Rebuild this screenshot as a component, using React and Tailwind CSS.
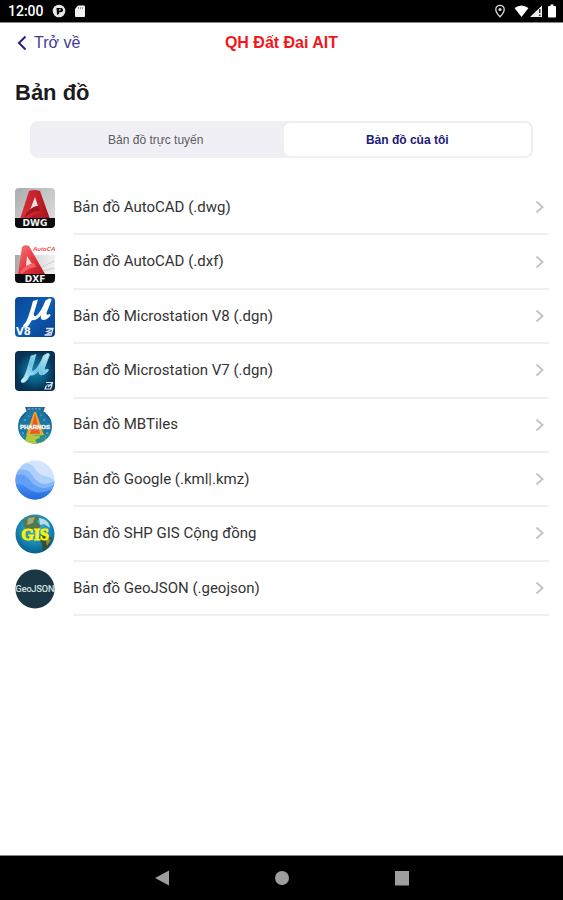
import React from "react";

function DwgIcon() {
  return (
    <svg viewBox="0 0 40 40" className="size-10" aria-hidden="true">
      <defs>
        <linearGradient id="dwgBg" x1="0" y1="0" x2="1" y2="1">
          <stop offset="0" stopColor="#a9abad" />
          <stop offset="1" stopColor="#e2e3e4" />
        </linearGradient>
        <linearGradient id="dwgA" x1="0" y1="0" x2="1" y2="0">
          <stop offset="0" stopColor="#d8303a" />
          <stop offset="0.55" stopColor="#c8202b" />
          <stop offset="1" stopColor="#9d141c" />
        </linearGradient>
        <clipPath id="dwgClip"><rect width="40" height="40" rx="4" /></clipPath>
      </defs>
      <g clipPath="url(#dwgClip)">
        <rect width="40" height="40" fill="url(#dwgBg)" />
        <path d="M5 31 L14 3 Q19 1 25 3 L35 31Z" fill="url(#dwgA)" />
        <path d="M20 9 L23 18 Q18 18 15 22Z" fill="#e4e4e6" />
        <path d="M23 18 L25 23 Q16 22 9 31 L11 26 Q16 19 23 18Z" fill="#9d141c" />
        <path d="M13 31 Q18 26 26 26 L27 31Z" fill="#b21a24" />
        <rect y="30" width="40" height="10" fill="#0b0b0b" />
      </g>
      <text x="20" y="38" textAnchor="middle" fontFamily="DejaVu Sans, sans-serif" fontWeight="700" fontSize="9" fill="#f2f2f2">DWG</text>
    </svg>
  );
}

function DxfIcon() {
  return (
    <svg viewBox="0 0 40 40" className="size-10" aria-hidden="true">
      <defs>
        <linearGradient id="dxfBg" x1="0" y1="0" x2="1" y2="0">
          <stop offset="0" stopColor="#a5a7a9" />
          <stop offset="0.6" stopColor="#dedfe0" />
          <stop offset="1" stopColor="#f2f2f2" />
        </linearGradient>
        <linearGradient id="dxfA" x1="0" y1="0" x2="1" y2="1">
          <stop offset="0" stopColor="#f4787a" />
          <stop offset="0.5" stopColor="#e83b3f" />
          <stop offset="1" stopColor="#b5151b" />
        </linearGradient>
        <clipPath id="dxfClip"><path d="M0 12 V36 Q0 40 4 40 H36 Q40 40 40 36 V10 H20 V0 H4 V12Z" /></clipPath>
      </defs>
      <g clipPath="url(#dxfClip)">
        <path d="M0 12 H40 V40 H0Z" fill="url(#dxfBg)" />
        <path d="M3 31 L7 4 Q9 1 14 3 L30 31 Z" fill="url(#dxfA)" />
        <path d="M12 13 L17 21 L11 23Z" fill="#fbe3e3" />
        <path d="M5 29 Q11 21 19 20 L21 24 Q12 25 7 31Z" fill="#f26366" />
        <path d="M27 24 L39 18 M28 28 L39 25" stroke="#c4c4c4" strokeWidth="0.8" />
        <rect y="31" width="40" height="9" fill="#0b0b0b" />
      </g>
      <text x="18" y="8" fontFamily="Liberation Sans, sans-serif" fontWeight="700" fontStyle="italic" fontSize="6" fill="#ee4b50">AutoCA</text>
      <text x="20" y="39" textAnchor="middle" fontFamily="DejaVu Sans, sans-serif" fontWeight="700" fontSize="9" fill="#f2f2f2">DXF</text>
    </svg>
  );
}

const MU =
  "M16 5 L21 3.5 L17 17 Q16 21 19 20 Q24 16 28.5 4.5 L32 2.5 Q35 2 34.5 4 L29.5 17 Q29 20 33 18 L33.5 19.5 Q30 24 26 24 Q23 23.5 24 19 Q20 25 15 24 L12 29 Q9 33 6 31 Q6 28.5 9 26 Q12 20 16 5Z";

function MicroV8Icon() {
  return (
    <svg viewBox="0 0 40 40" className="size-10" aria-hidden="true">
      <defs>
        <linearGradient id="v8Bg" x1="0" y1="0" x2="1" y2="1">
          <stop offset="0" stopColor="#0a4796" />
          <stop offset="0.5" stopColor="#0d5db4" />
          <stop offset="1" stopColor="#083b88" />
        </linearGradient>
      </defs>
      <rect width="40" height="40" rx="4" fill="url(#v8Bg)" />
      <path d={MU} fill="#fff" transform="translate(2 -1)" />
      <text x="1" y="38" fontFamily="DejaVu Sans, sans-serif" fontWeight="700" fontSize="10" fill="#fff">V8</text>
      <path d="M31 31.5 H38 L36 38 H29.5 M38 31.5 L32 34.5 L36 35.5 L30 38" stroke="#d5e3f5" strokeWidth="1.3" fill="none" />
    </svg>
  );
}

function MicroV7Icon() {
  return (
    <svg viewBox="0 0 40 40" className="size-10" aria-hidden="true">
      <defs>
        <radialGradient id="v7Bg">
          <stop offset="0" stopColor="#1283ad" />
          <stop offset="0.6" stopColor="#0b5a82" />
          <stop offset="1" stopColor="#073454" />
        </radialGradient>
        <linearGradient id="v7Mu" x1="0" y1="1" x2="1" y2="0">
          <stop offset="0" stopColor="#d4f2fb" />
          <stop offset="0.5" stopColor="#6cc4e2" />
          <stop offset="1" stopColor="#c6ecf8" />
        </linearGradient>
      </defs>
      <rect width="40" height="40" rx="4" fill="#072b49" />
      <rect x="1" y="1" width="38" height="38" rx="3" fill="url(#v7Bg)" />
      <path d={MU} fill="url(#v7Mu)" stroke="#9adcf0" strokeWidth="0.6" />
      <path d="M31 31.5 H38 M32 34 H37 L35.5 38 H30 L31.5 34.5 M38 31.5 L33 36" stroke="#d5e9f5" strokeWidth="1.2" fill="none" />
    </svg>
  );
}

function MbTilesIcon() {
  return (
    <svg viewBox="0 0 40 40" className="size-10" aria-hidden="true">
      <defs>
        <clipPath id="mbClip"><circle cx="20" cy="20.5" r="17" /></clipPath>
      </defs>
      <path d="M10 1 H30 L28 7 H12Z" fill="#256a9d" />
      <path d="M13 3 H27" stroke="#9bc3dc" strokeWidth="1" strokeDasharray="2 1.5" />
      <g clipPath="url(#mbClip)">
        <rect width="40" height="40" fill="#1d76a3" />
        <path d="M3 17 Q10 10 12 5 H4Z M37 17 Q30 10 28 5 H36Z" fill="#175f90" />
        <path d="M8 38 L19 6 H21 L32 38Z" fill="#f2a52a" />
        <path d="M15 28 L20 7 L25 28Z" fill="#e85c2a" />
        <path d="M9 30 Q18 26 31 29 V40 H9Z" fill="#b3c93c" />
        <path d="M17 30 Q25 28 25 32 Q18 33 22 37 L30 36 V29Z" fill="#2a8f94" />
        <path d="M3 25 L12 29 L9 38 L3 34Z M37 25 L30 28 L31 38 L37 34Z" fill="#2187a8" />
        <g fill="#a8d4e5">
          <circle cx="10" cy="14" r="0.7" />
          <circle cx="14" cy="10" r="0.6" />
          <circle cx="29" cy="14" r="0.7" />
          <circle cx="26" cy="9" r="0.6" />
          <circle cx="8" cy="27" r="0.7" />
          <circle cx="32" cy="27" r="0.7" />
        </g>
      </g>
      <text x="20" y="23" textAnchor="middle" fontFamily="Liberation Sans, sans-serif" fontWeight="700" fontSize="6" fill="#eef6f8" stroke="#eef6f8" strokeWidth="0.4">PHARNOS</text>
    </svg>
  );
}

function EarthIcon() {
  return (
    <svg viewBox="0 0 40 40" className="size-10" aria-hidden="true">
      <defs>
        <clipPath id="earthClip"><circle cx="20" cy="20" r="19.5" /></clipPath>
        <linearGradient id="earthDeep" x1="0" y1="0" x2="0" y2="1">
          <stop offset="0" stopColor="#4a8ff3" />
          <stop offset="1" stopColor="#2468dc" />
        </linearGradient>
      </defs>
      <g clipPath="url(#earthClip)">
        <rect width="40" height="40" fill="#d3e5fe" />
        <path d="M0 6 Q12 0 19 7 Q22 14 30 16 Q36 17 40 21 V40 H0Z" fill="#b0d0fc" />
        <path d="M0 11 Q10 7 16 13 Q20 22 29 24 Q35 24 40 21 V40 H0Z" fill="#85b6f9" />
        <path d="M0 16 Q8 12 14 19 Q19 27 28 28 Q35 28 40 24 V40 H0Z" fill="#5f9ff7" />
        <path d="M0 24 Q6 23 11 27 Q19 34 28 32 Q35 31 40 27 V40 H0Z" fill="url(#earthDeep)" />
      </g>
    </svg>
  );
}

function GisIcon() {
  return (
    <svg viewBox="0 0 40 40" className="size-10" aria-hidden="true">
      <defs>
        <clipPath id="gisClip"><circle cx="20" cy="20" r="19.5" /></clipPath>
        <radialGradient id="gisSea" cx="0.5" cy="0.35" r="0.65">
          <stop offset="0" stopColor="#55b7d8" />
          <stop offset="0.6" stopColor="#1787b4" />
          <stop offset="1" stopColor="#075c89" />
        </radialGradient>
      </defs>
      <g clipPath="url(#gisClip)">
        <rect width="40" height="40" fill="url(#gisSea)" />
        <path d="M8 7 Q15 0 24 3 L22 8 L26 12 L21 18 L16 15 L12 17 L9 12Z" fill="#53784b" />
        <path d="M13 4 L20 3 L18 9 L12 11Z" fill="#a3a880" />
        <path d="M24 4 Q34 5 35 14 L29 10 L25 11Z" fill="#b9dde4" />
        <path d="M24 23 Q31 18 37 25 Q34 34 28 37 L27 30Z" fill="#35502a" />
        <path d="M30 23 L36 26 L32 32Z" fill="#8b8a55" />
      </g>
      <text x="20" y="26" textAnchor="middle" fontFamily="Liberation Serif, serif" fontWeight="700" fontSize="16" fill="#fff200" stroke="#fff200" strokeWidth="1">GIS</text>
    </svg>
  );
}

function GeoJsonIcon() {
  return (
    <svg viewBox="0 0 40 40" className="size-10" aria-hidden="true">
      <circle cx="20" cy="20" r="19.5" fill="#1b3644" />
      <text x="20" y="23" textAnchor="middle" fontFamily="Roboto, sans-serif" fontSize="9" fill="#dfe6e9" stroke="#dfe6e9" strokeWidth="0.2">GeoJSON</text>
    </svg>
  );
}

const ITEMS = [
  { label: "Bản đồ AutoCAD (.dwg)", Icon: DwgIcon },
  { label: "Bản đồ AutoCAD (.dxf)", Icon: DxfIcon },
  { label: "Bản đồ Microstation V8 (.dgn)", Icon: MicroV8Icon },
  { label: "Bản đồ Microstation V7 (.dgn)", Icon: MicroV7Icon },
  { label: "Bản đồ MBTiles", Icon: MbTilesIcon },
  { label: "Bản đồ Google (.kml|.kmz)", Icon: EarthIcon },
  { label: "Bản đồ SHP GIS Cộng đồng", Icon: GisIcon },
  { label: "Bản đồ GeoJSON (.geojson)", Icon: GeoJsonIcon },
];

function StatusBar() {
  return (
    <div className="flex h-[23px] items-center justify-between border-b border-[#858585] bg-black pr-1.5 pl-2 text-white">
      <div className="flex items-center gap-2">
        <span className="w-9 font-['Roboto',sans-serif] text-sm font-medium">12:00</span>
        <svg viewBox="0 0 14 14" className="size-3.5" aria-hidden="true">
          <circle cx="7" cy="7" r="6.3" fill="#e8e8e8" />
          <path d="M4.5 4 H8.5 Q11.5 4 11 7 Q10 8.5 7.5 8 Q7.5 10.5 5 11Z" fill="#000" />
          <path d="M7 5.2 H8.8 V6.6 H7Z" fill="#e8e8e8" />
        </svg>
        <svg viewBox="0 0 12 14" className="h-3.5 w-3" aria-hidden="true">
          <path d="M4 1.5 H10 Q11 1.5 11 2.5 V12 Q11 13 10 13 H2 Q1 13 1 12 V5Z" fill="#f2f2f2" />
          <path d="M4.5 3 V5 M6.5 3 V5 M8.5 3 V5" stroke="#999" strokeWidth="0.9" />
        </svg>
      </div>
      <div className="flex items-center">
        <svg viewBox="0 0 12 14" className="mr-2 h-3.5 w-3" aria-hidden="true">
          <path d="M6 12.8 Q1.8 8.5 1.8 5.5 A4.2 4.2 0 0 1 10.2 5.5 Q10.2 8.5 6 12.8Z" fill="none" stroke="#ddd" strokeWidth="1.3" />
          <circle cx="6" cy="5.5" r="1.6" fill="#ddd" />
        </svg>
        <svg viewBox="0 0 15 14" className="h-3.5 w-[15px]" aria-hidden="true">
          <path d="M0.5 4 Q7.5 -1 14.5 4 L7.5 13Z" fill="#fff" />
        </svg>
        <svg viewBox="0 0 14 14" className="mr-1 h-3.5 w-3.5" aria-hidden="true">
          <path d="M13 1.5 V13 H1Z" fill="#ededed" />
          <path d="M10.8 5 V9 M10.8 10.4 V12" stroke="#000" strokeWidth="1.2" />
        </svg>
        <svg viewBox="0 0 10 14" className="h-3.5 w-2.5" aria-hidden="true">
          <path d="M3.5 0.5 H6.5 V2 H8.2 Q9 2 9 2.8 V12.4 Q9 13.4 8 13.4 H2 Q1 13.4 1 12.4 V2.8 Q1 2 1.8 2 H3.5Z" fill="#fff" />
        </svg>
      </div>
    </div>
  );
}

export default function App() {
  return (
    <div className="flex min-h-screen flex-col bg-white font-['Liberation_Sans',Arial,sans-serif]">
      <StatusBar />
      <header className="grid h-10 grid-cols-[1fr_auto_1fr] items-center px-4">
        <button type="button" className="flex items-center gap-1.5 justify-self-start text-base text-[#3f3b96]">
          <svg viewBox="0 0 12 16" className="h-4 w-3" fill="none" stroke="#27227f" strokeWidth="2" aria-hidden="true">
            <path d="M9.5 1.5 L3 8 L9.5 14.5" />
          </svg>
          Trở về
        </button>
        <span className="text-base font-bold text-[#f5161b]">QH Đất Đai AIT</span>
      </header>

      <main className="flex-1">
        <h1 className="px-[15px] pt-4 text-[22px] leading-7 font-bold text-[#1c1c1e]">Bản đồ</h1>

        <div role="tablist" className="mx-[30px] mt-3.5 grid h-[37px] grid-cols-2 rounded-lg bg-[#f0eff5] text-xs">
          <button type="button" role="tab" aria-selected="false" className="rounded-lg text-[#5c5b62]">Bản đồ trực tuyến</button>
          <button type="button" role="tab" aria-selected="true" className="rounded-lg border-2 border-[#f0eff3] bg-white font-bold text-[#1d1a78]">Bản đồ của tôi</button>
        </div>

        <ul className="mt-[23px] grid h-[435px] auto-rows-fr pr-3.5 pl-[15px] font-['Roboto',sans-serif] text-[15px] text-[#333]">
          {ITEMS.map(({ label, Icon }) => (
            <li key={label}>
              <button type="button" className="flex h-full w-full items-center gap-[18px] text-left">
                <Icon />
                <span className="flex h-full flex-1 items-center justify-between border-b-2 border-[#f0f0f0] pr-[3px]">
                  {label}
                  <svg viewBox="0 0 12 16" className="h-4 w-3" fill="none" stroke="#c2c2c4" strokeWidth="1.8" aria-hidden="true">
                    <path d="M2.5 2.5 L8.5 8 L2.5 13.5" />
                  </svg>
                </span>
              </button>
            </li>
          ))}
        </ul>
      </main>

      <nav className="flex h-[45px] items-center justify-center gap-[104px] border-t border-[#858585] bg-black">
        <button type="button" aria-label="Back" className="size-4">
          <svg viewBox="0 0 16 16" className="size-4"><path d="M1 8 L15 0.5 V15.5Z" fill="#9e9e9e" /></svg>
        </button>
        <button type="button" aria-label="Home" className="size-4">
          <svg viewBox="0 0 16 16" className="size-4"><circle cx="8" cy="8" r="7" fill="#9e9e9e" /></svg>
        </button>
        <button type="button" aria-label="Overview" className="size-4">
          <svg viewBox="0 0 16 16" className="size-4"><rect x="1" y="1" width="14" height="14.5" fill="#9e9e9e" /></svg>
        </button>
      </nav>
    </div>
  );
}
